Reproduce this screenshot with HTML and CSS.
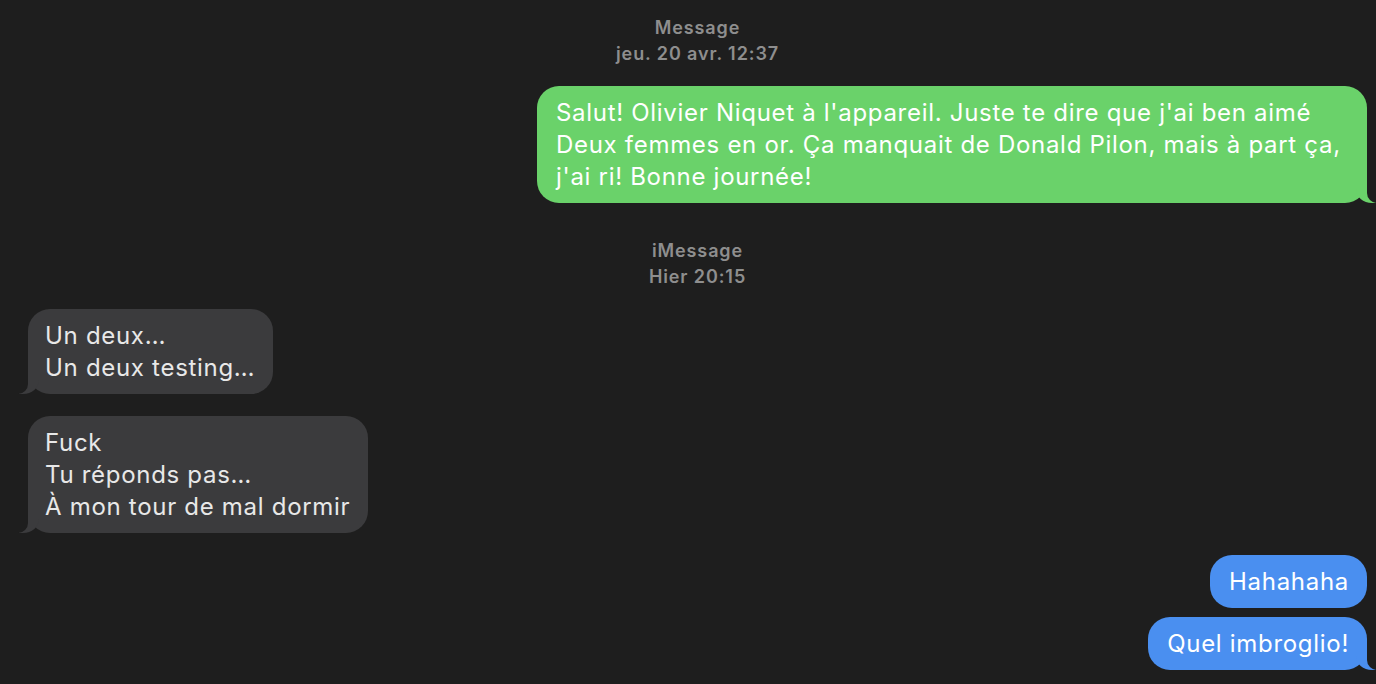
FILE: index.html
```html
<!DOCTYPE html>
<html lang="fr">

<head>
    <meta charset="utf-8">
    <meta name="viewport" content="width=device-width, initial-scale=1.0">
    <title>Messages</title>
    <link rel="stylesheet" href="styles.css">
</head>

<body>

    <main class="fil">

        <p class="horodatage">Message<br>jeu. 20 avr. 12:37</p>

        <div class="bulle moi sms queue">Salut! Olivier Niquet à l'appareil. Juste te dire que j'ai ben aimé<br>Deux femmes en or. Ça manquait de Donald Pilon, mais à part ça,<br>j'ai ri! Bonne journée!</div>

        <p class="horodatage deux">iMessage<br>Hier 20:15</p>

        <div class="bulle lui queue">Un deux…<br>Un deux testing…</div>

        <div class="bulle lui queue espace">Fuck<br>Tu réponds pas…<br>À mon tour de mal dormir</div>

        <div class="bulle moi espace">Hahahaha</div>

        <div class="bulle moi queue serre">Quel imbroglio!</div>

    </main>

</body>

</html>
```

FILE: styles.css
```css
body {
    box-sizing: border-box;
    margin: 0;
    background: #1e1e1e;
    font-family: 'Inter', 'Liberation Sans', sans-serif;
    overflow: hidden;
}

.fil {
    display: flex;
    flex-direction: column;
    padding: 15px 9px 0 28px;
}

.horodatage {
    margin: 0;
    text-align: center;
    color: #8e8e8e;
    font-size: 18px;
    font-weight: 600;
    line-height: 26px;
    letter-spacing: 0.9px;
}

.horodatage.deux {
    margin: 35px 0 19px 0;
}

.bulle {
    position: relative;
    padding: 11px 18px 10px 17px;
    border-radius: 22px;
    font-size: 24px;
    line-height: 32px;
    letter-spacing: 0.7px;
    white-space: nowrap;
}

.moi {
    align-self: flex-end;
    background: #4a8ff0;
    color: #fff;
    padding-left: 19px;
}

.moi.sms {
    background: #6ad26a;
    margin-top: 19px;
    width: 793px;
}

.lui {
    align-self: flex-start;
    background: #3b3b3d;
    color: #e8e8e8;
}

.espace {
    margin-top: 22px;
}

.serre {
    margin-top: 9px;
}

/* petite queue de la bulle */
.queue::before,
.queue::after {
    content: "";
    position: absolute;
    bottom: 0;
    height: 22px;
}

.moi.queue::before {
    right: -9px;
    width: 20px;
    background: inherit;
    border-bottom-left-radius: 16px 14px;
}

.moi.queue::after {
    right: -28px;
    width: 28px;
    background: #1e1e1e;
    border-bottom-left-radius: 10px;
}

.lui.queue::before {
    left: -9px;
    width: 20px;
    background: inherit;
    border-bottom-right-radius: 16px 14px;
}

.lui.queue::after {
    left: -28px;
    width: 28px;
    background: #1e1e1e;
    border-bottom-right-radius: 10px;
}
```
